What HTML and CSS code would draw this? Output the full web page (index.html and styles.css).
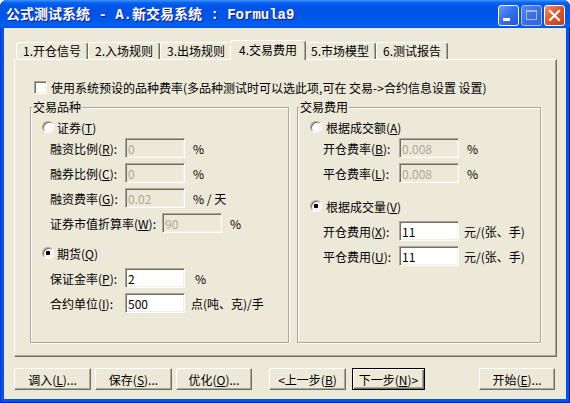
FILE: index.html
```html
<!DOCTYPE html>
<html lang="zh-CN">
<head>
<meta charset="utf-8">
<title>公式测试系统</title>
<link rel="stylesheet" href="styles.css">
</head>
<body>
<div class="window">
  <div class="titlebar">
    <span class="title">公式测试系统 - A.新交易系统 : Formula9</span>
    <div class="ctrls">
      <span class="cbtn cmin"><svg width="19" height="19" viewBox="0 0 19 19"><rect x="4" y="12" width="7" height="3" fill="#fff"/></svg></span>
      <span class="cbtn cmax"><svg width="19" height="19" viewBox="0 0 19 19"><rect x="4.5" y="4.5" width="10" height="9" fill="none" stroke="#9db8ef" stroke-width="1"/><rect x="4" y="4" width="11" height="2" fill="#9db8ef"/></svg></span>
      <span class="cbtn cclose"><svg width="19" height="19" viewBox="0 0 19 19"><path d="M5 5 L14 14 M14 5 L5 14" stroke="#fff" stroke-width="2.2" stroke-linecap="square"/></svg></span>
    </div>
  </div>
  <div class="client">
    <div class="tabs">
      <span class="tab">1.开仓信号</span>
      <span class="tab">2.入场规则</span>
      <span class="tab">3.出场规则</span>
      <span class="tab active">4.交易费用</span>
      <span class="tab">5.市场模型</span>
      <span class="tab">6.测试报告</span>
    </div>
    <div class="panel">
      <div class="chkrow"><span class="chk"></span><span>使用系统预设的品种费率(多品种测试时可以选此项,可在 交易-&gt;合约信息设置 设置)</span></div>
      <div class="groups">
        <div class="grp grp-left">
          <span class="legend">交易品种</span>
          <div class="rrow mt6"><span class="radio"></span><span>证券(<u>T</u>)</span></div>
          <div class="frow mt4"><span class="lbl">融资比例(<u>R</u>):</span><input class="edit" disabled value="0"><span class="unit">%</span></div>
          <div class="frow mt5"><span class="lbl">融券比例(<u>C</u>):</span><input class="edit" disabled value="0"><span class="unit">%</span></div>
          <div class="frow mt5"><span class="lbl">融资费率(<u>G</u>):</span><input class="edit" disabled value="0.02"><span class="unit">% / 天</span></div>
          <div class="frow mt5"><span class="lbl lbl-wide">证券市值折算率(<u>W</u>):</span><input class="edit" disabled value="90"><span class="unit">%</span></div>
          <div class="rrow mt13"><span class="radio on"></span><span>期货(<u>Q</u>)</span></div>
          <div class="frow mt8"><span class="lbl">保证金率(<u>P</u>):</span><input class="edit on" value="2"><span class="unit unit-p">%</span></div>
          <div class="frow mt5"><span class="lbl">合约单位(<u>I</u>):</span><input class="edit on" value="500"><span class="unit unit-i">点(吨、克)/手</span></div>
        </div>
        <div class="grp grp-right">
          <span class="legend">交易费用</span>
          <div class="rrow mt6"><span class="radio"></span><span>根据成交额(<u>A</u>)</span></div>
          <div class="frow mt4"><span class="lbl lbl-r">开仓费率(<u>B</u>):</span><input class="edit" disabled value="0.008"><span class="unit">%</span></div>
          <div class="frow mt5"><span class="lbl lbl-r">平仓费率(<u>L</u>):</span><input class="edit" disabled value="0.008"><span class="unit">%</span></div>
          <div class="rrow mt16"><span class="radio on"></span><span>根据成交量(<u>V</u>)</span></div>
          <div class="frow mt8"><span class="lbl lbl-r">开仓费用(<u>X</u>):</span><input class="edit on" value="11"><span class="unit unit-y">元/(张、手)</span></div>
          <div class="frow mt5"><span class="lbl lbl-r">平仓费用(<u>U</u>):</span><input class="edit on" value="11"><span class="unit unit-y">元/(张、手)</span></div>
        </div>
      </div>
    </div>
    <div class="buttons">
      <button class="btn">调入(<u>L</u>)...</button>
      <button class="btn gap4">保存(<u>S</u>)...</button>
      <button class="btn gap4 w76">优化(<u>O</u>)...</button>
      <button class="btn gap17">&lt;上一步(<u>B</u>)</button>
      <button class="btn btn-default gap6">下一步(<u>N</u>)&gt;</button>
      <button class="btn push-right w76">开始(<u>E</u>)...</button>
    </div>
  </div>
</div>
</body>
</html>
```
FILE: styles.css
```css
* { box-sizing: border-box; }
html, body { margin: 0; padding: 0; background: #fff; }
body {
  width: 570px;
  height: 403px;
  overflow: hidden;
  font-family: "Noto Sans CJK SC", "Noto Sans", sans-serif;
  font-size: 12px;
  color: #000;
}
u { text-decoration: underline; text-underline-offset: 1px; }

.window {
  width: 570px;
  height: 403px;
  display: flex;
  flex-direction: column;
  background: #0055e5;
  border-radius: 7px 7px 0 0;
  box-shadow: inset 1px 0 #0831d9, inset -1px 0 #001ea0, inset 0 -1px #001ea0;
}

.titlebar {
  height: 28px;
  flex: none;
  display: flex;
  align-items: center;
  padding: 2px 5px 0 6px;
  border-radius: 7px 7px 0 0;
  background: linear-gradient(to bottom, #3d95ff 0%, #0a61ee 10%, #0055ea 22%, #0054e3 55%, #005cf0 85%, #0062f7 92%, #0050dc 100%);
}
.title {
  flex: 1;
  color: #fff;
  font-family: "Liberation Mono", "Noto Sans CJK SC", monospace;
  font-weight: bold;
  font-size: 14px;
  line-height: 16px;
  white-space: pre;
  text-shadow: 1px 1px #0f1a8c;
}
.ctrls {
  display: flex;
  gap: 2px;
  align-self: flex-start;
  margin-top: 3px;
}
.cbtn {
  width: 21px;
  height: 21px;
  border: 1px solid #fff;
  border-radius: 3px;
  display: block;
}
.cbtn svg { display: block; }
.cmin { background: linear-gradient(135deg, #6d9cf7 0%, #3a74ee 40%, #1f55d6 100%); }
.cmax {
  background: linear-gradient(135deg, #5b88ea 0%, #3d6fe0 50%, #3363d8 100%);
  border-color: #a6bff2;
}
.cclose { background: linear-gradient(135deg, #f0906f 0%, #e2582f 45%, #c33a16 100%); }

.client {
  flex: 1;
  margin: 0 4px 4px;
  background: #ece9d8;
  padding: 12px 9px 0 10px;
  display: flex;
  flex-direction: column;
}

.tabs {
  display: flex;
  align-items: flex-end;
  height: 19px;
  padding-left: 2px;
  flex: none;
}
.tab {
  width: 72px;
  height: 17px;
  border: 1px solid;
  border-bottom: 0;
  border-color: #fff #716f64 transparent #fff;
  box-shadow: inset -1px 0 #aca899;
  border-radius: 3px 3px 0 0;
  text-align: center;
  line-height: 16px;
  white-space: nowrap;
  background: #ece9d8;
}
.tab.active {
  width: 76px;
  height: 20px;
  margin: 0 -2px -1px;
  position: relative;
  z-index: 1;
  line-height: 17px;
}

.panel {
  height: 298px;
  flex: none;
  border: 1px solid;
  border-color: #fff #716f64 #716f64 #fff;
  box-shadow: inset -1px -1px #aca899;
  padding: 20px 15px 0 15px;
}
.chkrow {
  display: flex;
  align-items: center;
  height: 14px;
  margin-left: 4px;
  gap: 4px;
  white-space: nowrap;
}
.chk {
  width: 13px;
  height: 13px;
  flex: none;
  background: #fff;
  border: 1px solid;
  border-color: #aca899 #fff #fff #aca899;
  box-shadow: inset 1px 1px #716f64, inset -1px -1px #f1efe2;
}

.groups {
  display: flex;
  gap: 8px;
  margin-top: 13px;
}
.grp {
  height: 236px;
  border: 1px solid #aca899;
  box-shadow: inset 1px 1px #fff, 1px 1px #fff;
  display: flex;
  flex-direction: column;
  align-items: flex-start;
}
.grp-left { width: 259px; padding-left: 11px; }
.grp-right { width: 244px; padding-left: 12px; }
.legend {
  margin-top: -8px;
  line-height: 14px;
  padding: 0 1px;
  background: #ece9d8;
}
.grp-left .legend { margin-left: -10px; }
.grp-right .legend { margin-left: -11px; }

.rrow {
  display: flex;
  align-items: center;
  height: 14px;
  gap: 3px;
  white-space: nowrap;
}
.grp-right .rrow { gap: 4px; }
.radio {
  width: 12px;
  height: 12px;
  flex: none;
  border-radius: 50%;
  background: #fff;
  border: 1px solid;
  border-color: #aca899 #fff #fff #aca899;
  box-shadow: inset 1px 1px #716f64, inset -1px -1px #f1efe2;
}
.radio.on {
  background: radial-gradient(circle at 50% 50%, #000 0 2px, #fff 2.6px);
}

.frow {
  display: flex;
  align-items: center;
  height: 20px;
  padding-left: 8px;
  white-space: nowrap;
}
.grp-right .frow { padding-left: 13px; }
.lbl { width: 75px; flex: none; }
.lbl-wide { width: 112px; }
.lbl-r { width: 76px; }
.edit {
  width: 60px;
  height: 20px;
  flex: none;
  margin: 0;
  padding: 0 2px;
  font: inherit;
  font-size: 12px;
  color: #aca899;
  -webkit-text-fill-color: #aca899;
  background: #ece9d8;
  border: 1px solid;
  border-color: #aca899 #fff #fff #aca899;
  box-shadow: inset 1px 1px #716f64, inset -1px -1px #f1efe2;
  outline: none;
  opacity: 1;
}
.edit.on {
  color: #000;
  -webkit-text-fill-color: #000;
  background: #fff;
}
.unit { margin-left: 8px; }
.unit-p { margin-left: 10px; }
.unit-i { margin-left: 6px; }
.unit-y { margin-left: 5px; }

.mt4 { margin-top: 4px; }
.mt5 { margin-top: 5px; }
.mt6 { margin-top: 6px; }
.mt8 { margin-top: 8px; }
.mt13 { margin-top: 13px; }
.mt16 { margin-top: 16px; }

.buttons {
  display: flex;
  margin-top: 11px;
  padding-right: 2px;
  flex: none;
}
.btn {
  width: 77px;
  height: 22px;
  margin: 0;
  padding: 0;
  font: inherit;
  font-size: 12px;
  color: #000;
  background: #ece9d8;
  border: 1px solid;
  border-color: #fff #716f64 #716f64 #fff;
  box-shadow: inset -1px -1px #aca899;
  display: flex;
  align-items: center;
  justify-content: center;
  white-space: nowrap;
}
.btn-default {
  width: 73px;
  border: 1px solid #000;
  box-shadow: inset 1px 1px #fff, inset -1px -1px #716f64, inset -2px -2px #aca899;
}
.w76 { width: 76px; }
.gap4 { margin-left: 4px; }
.gap6 { margin-left: 6px; }
.gap17 { margin-left: 17px; }
.push-right { margin-left: auto; }
```
